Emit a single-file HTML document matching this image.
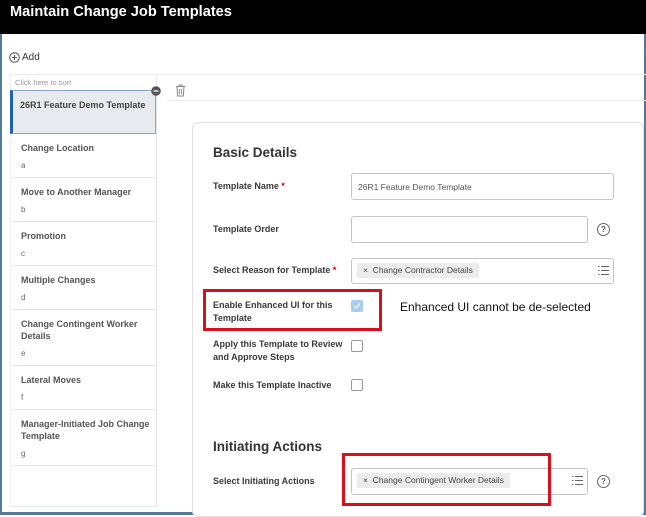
<!DOCTYPE html>
<html><head><meta charset="utf-8"><style>
*{margin:0;padding:0;box-sizing:border-box}
body{width:646px;height:515px;overflow:hidden;background:#fff;font-family:"Liberation Sans",Arial,sans-serif;position:relative;color:#333}
.a{position:absolute}
.lbl{position:absolute;font-size:9px;font-weight:bold;color:#3a3a3a;line-height:13px}
.req{color:#d0021b}
.item{position:absolute;left:12px;width:144px;border-bottom:1px solid #e6e6e6;background:#fff}
.item .t{position:absolute;left:9px;top:8px;font-size:9px;font-weight:bold;color:#555;line-height:12px;width:130px}
.item .s{position:absolute;left:9px;font-size:8px;color:#666}
.inp{position:absolute;border:1px solid #c4c4c4;border-radius:3px;background:#fff}
.chip{position:absolute;background:#ececec;font-size:8.5px;color:#444;line-height:15px;padding:0 6px;border-radius:2px}
.cb{position:absolute;width:12px;height:12px;border:1px solid #999;border-radius:2px;background:#fff}
.help{position:absolute;width:13px;height:13px;border:1.3px solid #666;border-radius:50%;font-size:8px;text-align:center;line-height:11px;color:#555;font-weight:bold}
.list{position:absolute;width:11px;height:9px}
.red{position:absolute;border:3px solid #d8101c}
</style></head><body>
<div class="a" style="left:0;top:0;width:646px;height:34px;background:#000"></div>
<div class="a" style="left:10px;top:4px;font-size:14.6px;font-weight:bold;color:#fff">Maintain Change Job Templates</div>
<div class="a" style="left:0;top:34px;width:2px;height:481px;background:#557a96"></div>
<div class="a" style="left:644px;top:34px;width:2px;height:481px;background:#557a96"></div>
<div class="a" style="left:0;top:512px;width:646px;height:3px;background:#557a96"></div>

<svg class="a" style="left:9px;top:52px" width="11" height="11"><circle cx="5.5" cy="5.5" r="4.8" fill="none" stroke="#555" stroke-width="1"/><path d="M5.5 3v5M3 5.5h5" stroke="#555" stroke-width="1"/></svg>
<div class="a" style="left:22px;top:51.5px;font-size:10px;color:#333">Add</div>

<div class="a" style="left:10px;top:74px;width:636px;height:1px;background:#ececec"></div>
<div class="a" style="left:15px;top:78px;font-size:7.5px;color:#999">Click here to sort</div>
<div class="a" style="left:10px;top:75px;width:1px;height:432px;background:#eee"></div>
<div class="a" style="left:156px;top:75px;width:1px;height:432px;background:#e4e4e4"></div>

<div class="a" style="left:10px;top:90px;width:146px;height:44px;background:#e7eaee;border:1px solid #8aa4c8;border-left:3px solid #1f5fb8"></div>
<div class="a" style="left:20px;top:100px;font-size:9px;font-weight:bold;color:#444">26R1 Feature Demo Template</div>
<svg class="a" style="left:151px;top:86px" width="10" height="10"><circle cx="5" cy="5" r="4.8" fill="#555"/><path d="M2.5 5h5" stroke="#fff" stroke-width="1.3"/></svg>

<div class="item" style="top:134px;height:44px"><div class="t">Change Location</div><div class="s" style="top:27px">a</div></div>
<div class="item" style="top:178px;height:44px"><div class="t">Move to Another Manager</div><div class="s" style="top:27px">b</div></div>
<div class="item" style="top:222px;height:44px"><div class="t">Promotion</div><div class="s" style="top:27px">c</div></div>
<div class="item" style="top:266px;height:44px"><div class="t">Multiple Changes</div><div class="s" style="top:27px">d</div></div>
<div class="item" style="top:310px;height:56px"><div class="t">Change Contingent Worker Details</div><div class="s" style="top:39px">e</div></div>
<div class="item" style="top:366px;height:44px"><div class="t">Lateral Moves</div><div class="s" style="top:27px">f</div></div>
<div class="item" style="top:410px;height:56px"><div class="t">Manager-Initiated Job Change Template</div><div class="s" style="top:39px">g</div></div>
<div class="item" style="top:466px;height:41px"></div>

<div class="a" style="left:167px;top:100px;width:479px;height:1px;background:#ececec"></div>
<svg class="a" style="left:175px;top:84px" width="11" height="13"><path d="M1 2.5h9M4 2.5V1h3v1.5M2 2.5l.6 9.5h5.8l.6-9.5M4.3 5v5M6.7 5v5" fill="none" stroke="#888" stroke-width="1"/></svg>

<div class="a" style="left:192px;top:122px;width:452px;height:395px;border:1px solid #e2e2e2;border-radius:6px;background:#fff"></div>
<div class="a" style="left:213px;top:145px;font-size:13.5px;font-weight:bold;color:#333">Basic Details</div>

<div class="lbl" style="left:213px;top:180px">Template Name <span class="req">*</span></div>
<div class="inp" style="left:351px;top:173px;width:263px;height:27px"></div>
<div class="a" style="left:358px;top:182px;font-size:8.5px;color:#555">26R1 Feature Demo Template</div>

<div class="lbl" style="left:213px;top:223px">Template Order</div>
<div class="inp" style="left:351px;top:216px;width:237px;height:27px"></div>
<div class="help" style="left:597px;top:223px">?</div>

<div class="lbl" style="left:213px;top:264px">Select Reason for Template <span class="req">*</span></div>
<div class="inp" style="left:351px;top:258px;width:263px;height:26px"></div>
<div class="chip" style="left:357px;top:263px">×&nbsp; Change Contractor Details</div>
<svg class="list" style="left:598px;top:266px"><path d="M0 .5h1.5M3 .5h8M0 4.5h1.5M3 4.5h8M0 8.5h1.5M3 8.5h8" stroke="#666" stroke-width="1"/></svg>

<div class="red" style="left:203px;top:289px;width:179px;height:42px"></div>
<div class="lbl" style="left:213px;top:299px">Enable Enhanced UI for this<br>Template</div>
<div class="cb" style="left:351px;top:300px;background:#a9cdf0;border-color:#a9cdf0"></div>
<svg class="a" style="left:353px;top:302px" width="8" height="8"><path d="M1 4l2 2 4-4.5" fill="none" stroke="#fff" stroke-width="1.2"/></svg>
<div class="a" style="left:400px;top:300px;font-size:12px;color:#111">Enhanced UI cannot be de-selected</div>

<div class="lbl" style="left:213px;top:338px">Apply this Template to Review<br>and Approve Steps</div>
<div class="cb" style="left:351px;top:340px"></div>
<div class="lbl" style="left:213px;top:379px">Make this Template Inactive</div>
<div class="cb" style="left:351px;top:379px"></div>

<div class="a" style="left:213px;top:439px;font-size:13.5px;font-weight:bold;color:#333">Initiating Actions</div>
<div class="lbl" style="left:213px;top:475px">Select Initiating Actions</div>
<div class="inp" style="left:351px;top:468px;width:237px;height:27px"></div>
<div class="chip" style="left:357px;top:473px">×&nbsp; Change Contingent Worker Details</div>
<svg class="list" style="left:572px;top:476px"><path d="M0 .5h1.5M3 .5h8M0 4.5h1.5M3 4.5h8M0 8.5h1.5M3 8.5h8" stroke="#666" stroke-width="1"/></svg>
<div class="help" style="left:597px;top:475px">?</div>
<div class="red" style="left:342px;top:453px;width:209px;height:53px"></div>
</body></html>
